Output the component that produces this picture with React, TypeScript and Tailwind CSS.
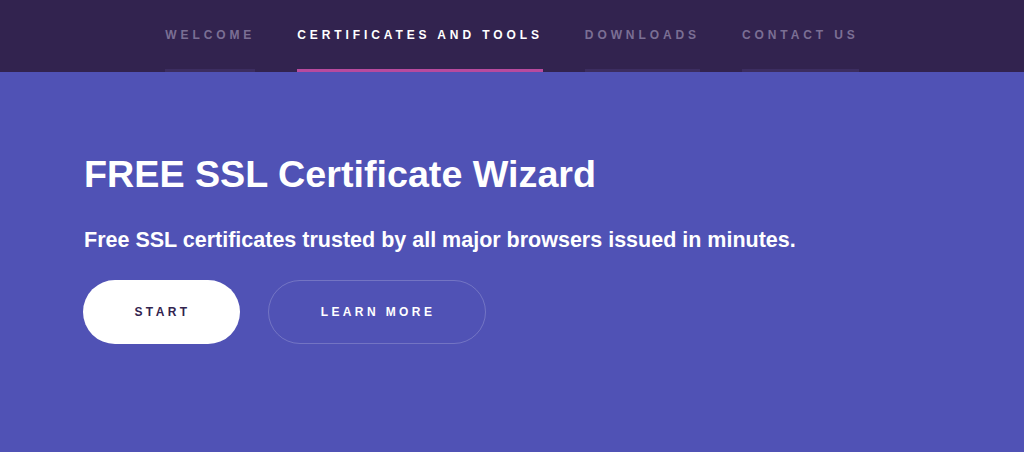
export default function App() {
  const nav = [
    { label: "WELCOME", active: false },
    { label: "CERTIFICATES AND TOOLS", active: true },
    { label: "DOWNLOADS", active: false },
    { label: "CONTACT US", active: false },
  ];

  return (
    <div className="min-h-[452px] w-full bg-[#5052b5] font-['Liberation_Sans',Arial,sans-serif]">
      {/* Top navigation */}
      <nav className="h-[72px] bg-[#32234f] flex justify-center gap-[42px]">
        {nav.map((item) => (
          <a
            key={item.label}
            href="#"
            className={
              item.active
                ? "flex items-center h-full pt-px border-b-[3px] border-[#b84a9e] text-[12px] font-bold tracking-[3.9px] text-white"
                : "flex items-center h-full pt-px border-b-[3px] border-[#3c2d60] text-[12px] font-bold tracking-[3.9px] text-[#7b6f94]"
            }
          >
            {item.label}
          </a>
        ))}
      </nav>

      {/* Hero */}
      <section className="px-[84px] pt-[80px] pb-[100px]">
        <h1 className="text-[37.7px] leading-[44px] font-bold text-white">
          FREE SSL Certificate Wizard
        </h1>
        <p className="mt-[31px] text-[21.5px] leading-[26px] font-bold text-white">
          Free SSL certificates trusted by all major browsers issued in minutes.
        </p>
        <div className="mt-[27px] flex gap-[28px] -ml-px">
          <a
            href="#"
            className="w-[157px] h-[64px] rounded-full bg-white flex items-center justify-center pl-[2px] text-[12px] font-bold tracking-[3.4px] text-[#32234f]"
          >
            START
          </a>
          <a
            href="#"
            className="w-[218px] h-[64px] rounded-full border border-white/20 flex items-center justify-center pl-[2px] text-[12px] font-bold tracking-[3.4px] text-white"
          >
            LEARN MORE
          </a>
        </div>
      </section>
    </div>
  );
}
